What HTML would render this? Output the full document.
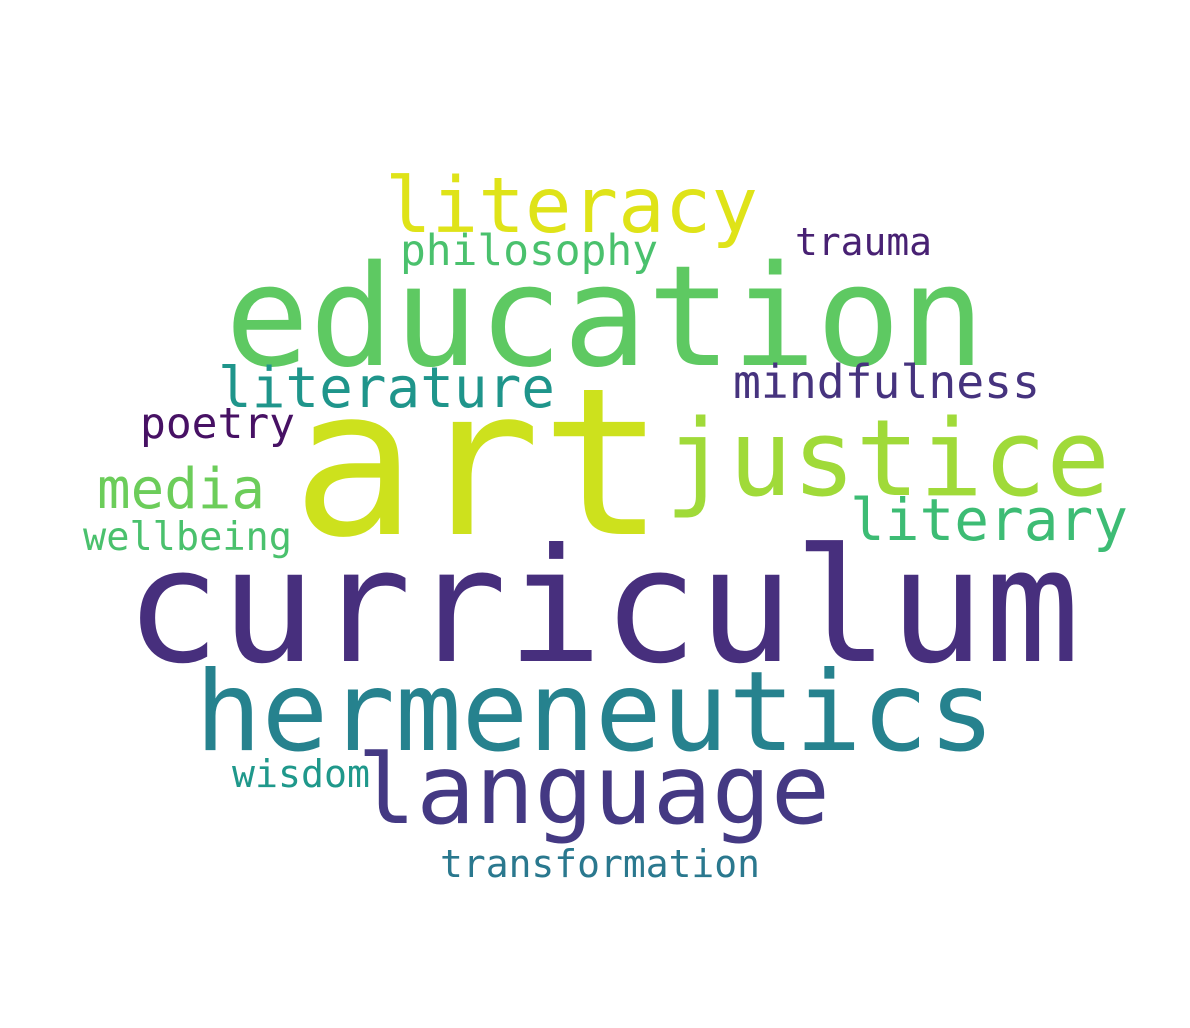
<!DOCTYPE html>
<html><head><meta charset="utf-8"><style>
html,body{margin:0;padding:0;background:#fff;width:1190px;height:1028px;overflow:hidden}
svg text{font-family:"DejaVu Sans Mono","Liberation Mono",monospace}
</style></head><body>
<svg width="1190" height="1028" xmlns="http://www.w3.org/2000/svg">
<text x="385" y="232" font-size="77" fill="#dfe318" textLength="373" lengthAdjust="spacingAndGlyphs">literacy</text>
<text x="400" y="265" font-size="43" fill="#4ac16d" textLength="258" lengthAdjust="spacingAndGlyphs">philosophy</text>
<text x="795" y="255" font-size="38" fill="#482173" textLength="137" lengthAdjust="spacingAndGlyphs">trauma</text>
<text x="225" y="365" font-size="140" fill="#5ec962" textLength="760" lengthAdjust="spacingAndGlyphs">education</text>
<text x="218" y="407" font-size="56" fill="#1f958b" textLength="337" lengthAdjust="spacingAndGlyphs">literature</text>
<text x="733" y="398" font-size="46" fill="#46337e" textLength="307" lengthAdjust="spacingAndGlyphs">mindfulness</text>
<text x="140" y="438" font-size="43" fill="#471164" textLength="155" lengthAdjust="spacingAndGlyphs">poetry</text>
<text x="292" y="534" font-size="205" fill="#cde11d" textLength="373" lengthAdjust="spacingAndGlyphs">art</text>
<text x="665" y="495" font-size="106" fill="#a0da39" textLength="445" lengthAdjust="spacingAndGlyphs">justice</text>
<text x="97" y="508" font-size="56" fill="#6ccd5a" textLength="168" lengthAdjust="spacingAndGlyphs">media</text>
<text x="850" y="540" font-size="58" fill="#3dbc74" textLength="278" lengthAdjust="spacingAndGlyphs">literary</text>
<text x="83" y="550" font-size="39" fill="#4ac16d" textLength="209" lengthAdjust="spacingAndGlyphs">wellbeing</text>
<text x="125" y="661" font-size="158" fill="#472f7d" textLength="955" lengthAdjust="spacingAndGlyphs">curriculum</text>
<text x="195" y="750" font-size="111" fill="#26828e" textLength="800" lengthAdjust="spacingAndGlyphs">hermeneutics</text>
<text x="357" y="823" font-size="96" fill="#443983" textLength="473" lengthAdjust="spacingAndGlyphs">language</text>
<text x="232" y="787" font-size="38" fill="#1f988b" textLength="138" lengthAdjust="spacingAndGlyphs">wisdom</text>
<text x="440" y="877" font-size="38" fill="#2a788e" textLength="320" lengthAdjust="spacingAndGlyphs">transformation</text>
</svg>
</body></html>
